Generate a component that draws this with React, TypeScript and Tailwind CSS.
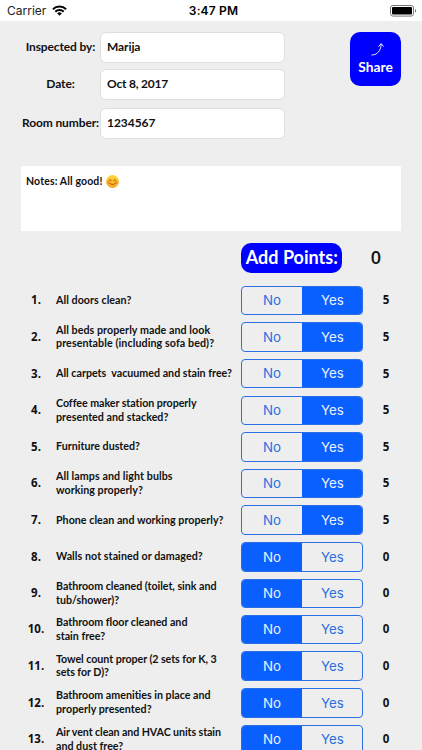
import React from "react";

type Line = [text: string, tracking?: string];
type Item = { lines: Line[]; yes: boolean; gap?: string };

const items: Item[] = [
  { lines: [["All doors clean?", "tracking-[0.05px]"]], yes: true },
  { lines: [["All beds properly made and look", "tracking-[0.06px]"], ["presentable (including sofa bed)?", "tracking-[0.09px]"]], yes: true },
  { lines: [["All carpets  vacuumed and stain free?"]], yes: true },
  { lines: [["Coffee maker station properly", "-tracking-[0.05px]"], ["presented and stacked?", "tracking-[0.03px]"]], yes: true },
  { lines: [["Furniture dusted?"]], yes: true },
  { lines: [["All lamps and light bulbs", "tracking-[0.07px]"], ["working properly?", "tracking-[0.03px]"]], yes: true },
  { lines: [["Phone clean and working properly?", "tracking-[0.02px]"]], yes: true },
  { lines: [["Walls not stained or damaged?", "tracking-[0.06px]"]], yes: false },
  { lines: [["Bathroom cleaned (toilet, sink and", "-tracking-[0.03px]"], ["tub/shower)?"]], yes: false },
  { lines: [["Bathroom floor cleaned and", "-tracking-[0.02px]"], ["stain free?"]], yes: false, gap: "-mt-[0.8px]" },
  { lines: [["Towel count proper (2 sets for K, 3", "-tracking-[0.06px]"], ["sets for D)?", "-tracking-[0.06px]"]], yes: false },
  { lines: [["Bathroom amenities in place and", "-tracking-[0.01px]"], ["properly presented?", "tracking-[0.03px]"]], yes: false },
  { lines: [["Air vent clean and HVAC units stain", "-tracking-[0.10px]"], ["and dust free?"]], yes: false },
];

function StatusBar() {
  return (
    <header className="grid h-[21px] shrink-0 grid-cols-3 items-center bg-white pt-[1px] font-['Inter',sans-serif] text-[12px] text-black">
      <div className="flex items-center gap-[6px] pl-[7px]">
        <span className="font-normal text-[#222]">Carrier</span>
        <svg width="15" height="11" viewBox="0 0 15 11" className="mb-px">
          <g fill="none" stroke="#000" strokeWidth="2">
            <path d="M0.9 4.2a9.5 9.5 0 0 1 13.2 0" />
            <path d="M3.3 6.8a6 6 0 0 1 8.4 0" />
          </g>
          <path d="M5.2 8.4a3.2 3.2 0 0 1 4.6 0L7.5 10.7z" />
        </svg>
      </div>
      <div className="pl-[5px] text-center font-semibold tracking-[0.15px]">3:47 PM</div>
      <div className="flex justify-end pr-[5px]">
        <svg width="27" height="12" viewBox="0 0 27 12">
          <rect x="0.5" y="0.5" width="23" height="10.6" rx="2.4" fill="none" stroke="#777" />
          <rect x="2" y="2" width="20" height="7.6" rx="1" />
          <path d="M25 4v3.6c1.5-.4 1.5-3.2 0-3.6z" fill="#777" />
        </svg>
      </div>
    </header>
  );
}

function Field({ label, value, tracking }: { label: string; value: string; tracking: string }) {
  return (
    <div className="flex h-[31px] items-center">
      <div className="flex w-[79px] justify-center pb-[1px] text-[12px] tracking-[-0.12px] whitespace-nowrap">{label}</div>
      <div className={`flex h-full w-[185px] items-center rounded-[6px] border border-[#dfdfdf] bg-white px-[6px] pb-[1px] text-[12px] ${tracking}`}>
        {value}
      </div>
    </div>
  );
}

function YesNo({ yes }: { yes: boolean }) {
  const on = "bg-[#0a60ff] text-[#e8f0ff]";
  const off = "text-[#2c6fdf]";
  return (
    <div className="flex h-[29.6px] w-[121.7px] shrink-0 overflow-hidden rounded-[4px] border border-[#2c6fe4] font-['Inter',sans-serif] text-[13.3px] font-normal">
      <div className={`flex flex-1 items-center justify-center pt-[1.5px] ${yes ? off : on}`}>No</div>
      <div className={`flex flex-1 items-center justify-center pt-[1.5px] pl-[1px] ${yes ? on : off}`}>Yes</div>
    </div>
  );
}

export default function App() {
  return (
    <div className="flex h-[750px] w-[422px] flex-col overflow-hidden bg-[#eeeeee] font-['Lato',sans-serif] font-bold text-[#111] [font-variant-ligatures:none]">
      <StatusBar />
      <section className="flex h-[145px] shrink-0 justify-between pt-[10.5px] pr-[21px] pl-[21px]">
        <div className="flex flex-col">
          <Field label="Inspected by:" value="Marija" tracking="tracking-[-0.1px]" />
          <div className="h-[6.5px]" />
          <Field label="Date:" value="Oct 8, 2017" tracking="tracking-[-0.22px]" />
          <div className="h-[8px]" />
          <Field label="Room number:" value="1234567" tracking="tracking-[-0.05px]" />
        </div>
        <button className="flex h-[54px] w-[51px] flex-col items-center rounded-[10px] bg-[#0000fe] pt-[11px] text-white">
          <svg width="13" height="13" viewBox="0 0 13 13" className="ml-[4px]" fill="none" stroke="#fff" strokeWidth="0.9">
            <path d="M0.5 12C6 12 10 8 10.2 1M7.5 3.6l2.7-3 2.3 3" />
          </svg>
          <span className="mt-[3px] text-[13.8px] leading-[16px]">Share</span>
        </button>
      </section>
      <section className="mx-[21px] h-[65px] shrink-0 bg-white px-[5px] pt-[8px]">
        <div className="flex items-center gap-[3px] text-[10.5px] leading-[14px]">
          <span className="tracking-[0.14px]">Notes: All good!</span>
          <svg width="13" height="13" viewBox="0 0 24 24">
            <defs>
              <linearGradient id="face" x1="0" y1="0" x2="0" y2="1">
                <stop offset="0" stopColor="#ffd83b" />
                <stop offset="1" stopColor="#f7a51e" />
              </linearGradient>
            </defs>
            <circle cx="12" cy="12" r="11.8" fill="url(#face)" />
            <circle cx="4.5" cy="14" r="3" fill="#f2683c" opacity=".4" />
            <circle cx="19.5" cy="14" r="3" fill="#f2683c" opacity=".4" />
            <g fill="none" stroke="#8a5210" strokeWidth="1.6" strokeLinecap="round">
              <path d="M5.5 10q2-3.5 4.5 0M14 10q2.5-3.5 4.5 0M6.5 15q5.5 5.5 11 0" />
            </g>
          </svg>
        </div>
      </section>
      <section className="flex h-[51px] shrink-0 items-start pt-[11.5px] pl-[241.3px]">
        <button className="flex h-[30.5px] w-[101px] items-center justify-center rounded-[10px] bg-[#0000fe] text-[18px] whitespace-nowrap text-white">
          Add Points:
        </button>
        <div className="w-[67px] text-center font-['Open_Sans',sans-serif] text-[18px] leading-[29px] font-semibold">0</div>
      </section>
      <ol className="flex flex-col">
        {items.map((item, i) => (
          <li key={i} className={`flex h-[36.67px] shrink-0 items-center ${item.gap ?? ""}`}>
            <div className="w-[56px] pb-[1px] pl-[16px] text-center font-['Open_Sans',sans-serif] text-[11.5px]">{i + 1}.</div>
            <div className="w-[185.3px] pb-[1.5px] text-[10.7px] leading-[13.6px] whitespace-pre">
              {item.lines.map(([text, tracking]) => (
                <div key={text} className={tracking}>{text}</div>
              ))}
            </div>
            <YesNo yes={item.yes} />
            <div className="w-[46px] pb-[1px] text-center font-['Open_Sans',sans-serif] text-[11.5px]">{item.yes ? 5 : 0}</div>
          </li>
        ))}
      </ol>
    </div>
  );
}
